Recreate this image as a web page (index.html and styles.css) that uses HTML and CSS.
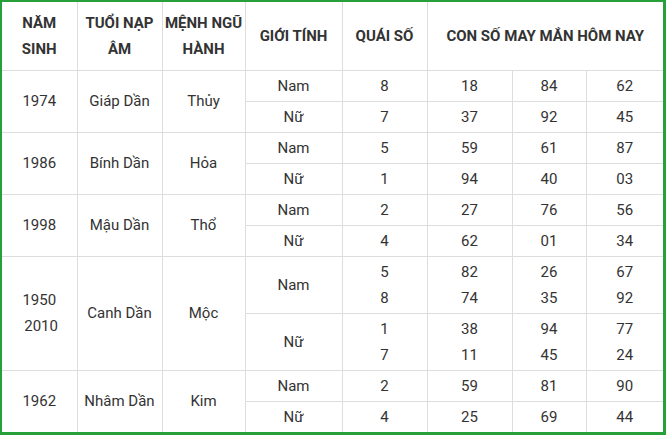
FILE: index.html
```html
<!DOCTYPE html>
<html lang="vi">
<head>
<meta charset="utf-8">
<link rel="stylesheet" href="styles.css">
</head>
<body>
<div class="frame">
<table class="lucky">
<colgroup>
<col class="c1"><col class="c2"><col class="c3"><col class="c4"><col class="c5"><col class="c6"><col class="c7"><col class="c8">
</colgroup>
<thead>
<tr class="head">
<th>NĂM<br>SINH</th>
<th>TUỔI NẠP<br>ÂM</th>
<th>MỆNH NGŨ<br>HÀNH</th>
<th>GIỚI TÍNH</th>
<th>QUÁI SỐ</th>
<th colspan="3">CON SỐ MAY MẮN HÔM NAY</th>
</tr>
</thead>
<tbody>
<tr class="r"><td rowspan="2">1974</td><td rowspan="2">Giáp Dần</td><td rowspan="2">Thủy</td><td>Nam</td><td>8</td><td>18</td><td>84</td><td>62</td></tr>
<tr class="r"><td>Nữ</td><td>7</td><td>37</td><td>92</td><td>45</td></tr>
<tr class="r"><td rowspan="2">1986</td><td rowspan="2">Bính Dần</td><td rowspan="2">Hỏa</td><td>Nam</td><td>5</td><td>59</td><td>61</td><td>87</td></tr>
<tr class="r"><td>Nữ</td><td>1</td><td>94</td><td>40</td><td>03</td></tr>
<tr class="r"><td rowspan="2">1998</td><td rowspan="2">Mậu Dần</td><td rowspan="2">Thổ</td><td>Nam</td><td>2</td><td>27</td><td>76</td><td>56</td></tr>
<tr class="r"><td>Nữ</td><td>4</td><td>62</td><td>01</td><td>34</td></tr>
<tr class="rr"><td rowspan="2">1950<br>&nbsp;2010</td><td rowspan="2">Canh Dần</td><td rowspan="2">Mộc</td><td>Nam</td><td>5<br>8</td><td>82<br>74</td><td>26<br>35</td><td>67<br>92</td></tr>
<tr class="rr"><td>Nữ</td><td>1<br>7</td><td>38<br>11</td><td>94<br>45</td><td>77<br>24</td></tr>
<tr class="r"><td rowspan="2">1962</td><td rowspan="2">Nhâm Dần</td><td rowspan="2">Kim</td><td>Nam</td><td>2</td><td>59</td><td>81</td><td>90</td></tr>
<tr class="r"><td>Nữ</td><td>4</td><td>25</td><td>69</td><td>44</td></tr>
</tbody>
</table>
</div>
</body>
</html>
```
FILE: styles.css
```css
html, body {
  margin: 0;
  padding: 0;
  background: #ffffff;
}
.frame {
  width: 661px;
  height: 430px;
  border-left: 2px solid #27a03a;
  border-top: 2px solid #27a03a;
  border-right: 3px solid #27a03a;
  border-bottom: 3px solid #27a03a;
  overflow: hidden;
}
.lucky {
  width: 661px;
  height: 430px;
  border-collapse: collapse;
  border-style: hidden;
  table-layout: fixed;
  font-family: Roboto, "Liberation Sans", sans-serif;
  font-size: 15px;
  color: #333333;
}
.c1 { width: 75px; }
.c2 { width: 85px; }
.c3 { width: 83px; }
.c4 { width: 97px; }
.c5 { width: 85px; }
.c6 { width: 85px; }
.c7 { width: 74px; }
.c8 { width: 77px; }
.lucky th,
.lucky td {
  border: 1px solid #dddddd;
  padding: 0;
  text-align: center;
  vertical-align: middle;
  line-height: 26px;
}
.lucky th {
  font-weight: 700;
  color: #333333;
}
.head { height: 68px; }
.r { height: 31px; }
.rr { height: 57px; }
```
